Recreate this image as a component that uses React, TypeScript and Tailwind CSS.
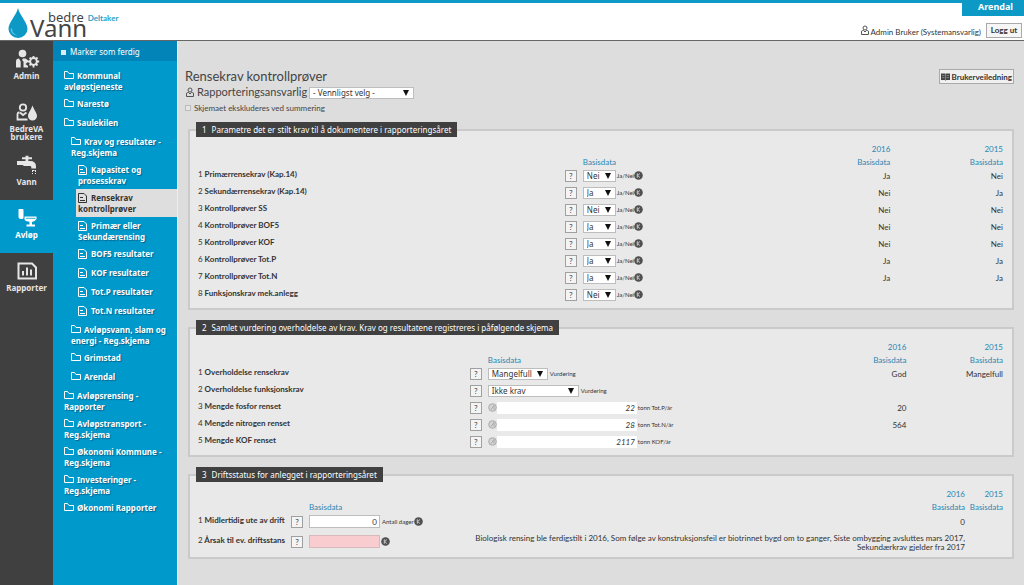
import { useId } from 'react';
import clsx from 'clsx';

type Level = 0 | 1 | 2;

interface TreeItem {
  label: string;
  level: Level;
  active?: boolean;
}

interface RailItem {
  label: string;
  icon: () => React.JSX.Element;
  active?: boolean;
}

const treeItems: TreeItem[] = [
  { label: 'Kommunal avløpstjeneste', level: 0 },
  { label: 'Narestø', level: 0 },
  { label: 'Saulekilen', level: 0 },
  { label: 'Krav og resultater - Reg.skjema', level: 1 },
  { label: 'Kapasitet og prosesskrav', level: 2 },
  { label: 'Rensekrav kontrollprøver', level: 2, active: true },
  { label: 'Primær eller Sekundærensing', level: 2 },
  { label: 'BOF5 resultater', level: 2 },
  { label: 'KOF resultater', level: 2 },
  { label: 'Tot.P resultater', level: 2 },
  { label: 'Tot.N resultater', level: 2 },
  { label: 'Avløpsvann, slam og energi - Reg.skjema', level: 1 },
  { label: 'Grimstad', level: 1 },
  { label: 'Arendal', level: 1 },
  { label: 'Avløpsrensing - Rapporter', level: 0 },
  { label: 'Avløpstransport - Reg.skjema', level: 0 },
  { label: 'Økonomi Kommune - Reg.skjema', level: 0 },
  { label: 'Investeringer - Reg.skjema', level: 0 },
  { label: 'Økonomi Rapporter', level: 0 },
];

const levelMargin: Record<Level, string> = {
  0: 'ml-[11px]',
  1: 'ml-[18px]',
  2: 'ml-[25px]',
};

const requirements = [
  { label: 'Primærrensekrav (Kap.14)', value: 'Nei', y2016: 'Ja', y2015: 'Nei' },
  { label: 'Sekundærrensekrav (Kap.14)', value: 'Ja', y2016: 'Nei', y2015: 'Ja' },
  { label: 'Kontrollprøver SS', value: 'Nei', y2016: 'Nei', y2015: 'Nei' },
  { label: 'Kontrollprøver BOF5', value: 'Ja', y2016: 'Nei', y2015: 'Nei' },
  { label: 'Kontrollprøver KOF', value: 'Ja', y2016: 'Nei', y2015: 'Nei' },
  { label: 'Kontrollprøver Tot.P', value: 'Ja', y2016: 'Ja', y2015: 'Ja' },
  { label: 'Kontrollprøver Tot.N', value: 'Ja', y2016: 'Ja', y2015: 'Ja' },
  { label: 'Funksjonskrav mek.anlegg', value: 'Nei', y2016: '', y2015: '' },
];

const assessments = [
  { label: 'Overholdelse rensekrav', value: 'Mangelfull', width: 'w-[60px]', y2016: 'God', y2015: 'Mangelfull' },
  { label: 'Overholdelse funksjonskrav', value: 'Ikke krav', width: 'w-[91px]', y2016: '', y2015: '' },
];

const amounts = [
  { label: 'Mengde fosfor renset', value: '22', unit: 'tonn Tot.P/år', y2016: '20' },
  { label: 'Mengde nitrogen renset', value: '28', unit: 'tonn Tot.N/år', y2016: '564' },
  { label: 'Mengde KOF renset', value: '2117', unit: 'tonn KOF/år', y2016: '' },
];

function AdminIcon() {
  return (
    <svg viewBox="0 0 26 20" className="h-5 w-[26px]" fill="currentColor">
      <circle cx="8.500" cy="4.500" r="3.800" />
      <path d="M2 18.500V12.500Q2 9.500 5 9.500L6.700 12.500V18.500ZM8 11L9 9.500H11.500L14 11.200V13L11.500 15L14 17V18.500H9.500V12.500Z" />
      <circle cx="19.500" cy="12.500" r="3.400" fill="none" stroke="currentColor" strokeWidth="2" />
      <path
        d="M19.500 7v2M19.500 16v2.500M14 12.500h2M23 12.500h2.200M15.600 8.600l1.400 1.400M22 15l1.500 1.500M15.600 16.400l1.400-1.400M22 10l1.500-1.500"
        stroke="currentColor"
        strokeWidth="1.800"
      />
    </svg>
  );
}

function UserDropIcon() {
  return (
    <svg viewBox="0 0 26 20" className="h-5 w-[26px]" fill="none" stroke="currentColor" strokeWidth="1.800">
      <circle cx="9" cy="5.500" r="3.200" />
      <path d="M5.500 10.500H5Q3.500 10.500 3.500 12.500V17.500H13.500M6 10.500L9 13L12.500 10.500" />
      <path d="M18.500 3.500C17 8 14 10.800 14 14A4.500 4.500 0 0 0 23 14C23 10.800 20 8 18.500 3.500Z" fill="currentColor" stroke="none" />
    </svg>
  );
}

function TapIcon() {
  return (
    <svg viewBox="0 0 26 20" className="h-5 w-[26px]" fill="currentColor">
      <path d="M8 2.200H11.500V0.800H14.500V2.200H18V4.200H14.300V6H16Q22 6 22 11.500V13.500H17.300V12Q17.300 11 16 11H10L8.500 10H3V6H11.500V4.200H8Z" />
      <path d="M18.500 15v4M21.500 15v4M18.500 15.500h3" fill="none" stroke="currentColor" strokeDasharray="2 1" />
    </svg>
  );
}

function ToiletIcon() {
  return (
    <svg viewBox="0 0 26 20" className="h-5 w-[26px]" fill="currentColor">
      <path d="M5 1H8.500Q9.500 1 9.500 2V9Q10 11 8 11H7Q4.500 11 4.500 8.500V1.500Q4.500 1 5 1Z" />
      <path d="M10.500 8.500H22.500V11Q21 13.500 18 14V16.500H21V18.500H12.500V16.500H15.500V13.800Q11.500 13.500 10.500 11.500Z" />
      <path d="M12 10.300h9.500" stroke="#0099cc" strokeWidth="0.800" />
    </svg>
  );
}

function ReportIcon() {
  return (
    <svg viewBox="0 0 26 20" className="h-5 w-[26px]" fill="none" stroke="currentColor" strokeWidth="2">
      <path d="M4.500 2.500H18L22 6.500V17.500H4.500Z" />
      <path d="M9 14.500V10M13 14.500V6.500M17 14.500V8.500" />
    </svg>
  );
}

const railItems: RailItem[] = [
  { label: 'Admin', icon: AdminIcon },
  { label: 'BedreVA brukere', icon: UserDropIcon },
  { label: 'Vann', icon: TapIcon },
  { label: 'Avløp', icon: ToiletIcon, active: true },
  { label: 'Rapporter', icon: ReportIcon },
];

function FolderIcon() {
  return (
    <svg viewBox="0 0 10 9" className="mr-[3px] inline h-[9px] w-[10px] align-[-1px]" fill="none" stroke="currentColor">
      <path d="M0.500 0.500H3.500L5 2.500H9.500V7.500H0.500Z" />
    </svg>
  );
}

function PageIcon() {
  return (
    <svg viewBox="0 0 10 10" className="mr-[3px] inline h-[10px] w-[10px] align-[-2px]" fill="none" stroke="currentColor">
      <path d="M0.500 0.500H6L8.500 3V9.500H0.500Z" />
      <path d="M2 4.500H5M2 7.500H7" />
    </svg>
  );
}

function PersonIcon() {
  return (
    <svg viewBox="0 0 10 11" className="h-[11px] w-[10px] shrink-0" fill="none" stroke="#555">
      <circle cx="5" cy="3" r="2" />
      <path d="M3.500 5.500H2.500Q1.500 5.500 1.500 7V9.500H8.500V7Q8.500 5.500 7.500 5.500H6.500L5 7Z" />
    </svg>
  );
}

function KBadge() {
  return (
    <svg viewBox="0 0 9 9" className="h-[9px] w-[9px] shrink-0">
      <circle cx="4.500" cy="4.500" r="4.300" fill="#505050" />
      <path d="M3.300 2.300V6.700M5.900 2.500L3.700 4.500L5.900 6.500" fill="none" stroke="#ccc" strokeWidth="1" />
    </svg>
  );
}

function HelpButton() {
  return (
    <button
      type="button"
      aria-label="Hjelp"
      className="block h-3 w-3 border border-[#a0a0a0] bg-[#f4f4f4] text-center text-[8px] leading-[10px] text-[#444]"
    >
      ?
    </button>
  );
}

interface SelectProps {
  value: string;
  options?: string[];
  className: string;
  id?: string;
}

function Select({ value, options = [value], className, id }: SelectProps) {
  return (
    <span className={clsx('relative block shrink-0', className)}>
      <select
        id={id}
        defaultValue={value}
        className="block h-3 w-full appearance-none border border-[#bdbdbd] bg-white px-[3px] font-['Noto_Sans',sans-serif] text-[8px] leading-[10px] text-[#333]"
      >
        {options.map((option) => (
          <option key={option}>{option}</option>
        ))}
      </select>
      <svg viewBox="0 0 6 6" className="pointer-events-none absolute top-[3px] right-[5px] h-[6px] w-[6px]">
        <path d="M0 0H6L3 6Z" fill="#111" />
      </svg>
    </span>
  );
}

function YearHeader() {
  return (
    <thead className="text-[8px] text-[#2a87b3]">
      <tr className="h-[13px]">
        <td colSpan={3} />
        <th scope="col" className="p-0 pt-px text-right font-normal">2016</th>
        <th scope="col" className="p-0 pt-px text-right font-normal">2015</th>
      </tr>
      <tr className="h-[13px]">
        <td colSpan={2} />
        <th scope="col" className="p-0 pt-px text-left font-normal">Basisdata</th>
        <th scope="col" className="p-0 pt-px text-right font-normal">Basisdata</th>
        <th scope="col" className="p-0 pt-px text-right font-normal">Basisdata</th>
      </tr>
    </thead>
  );
}

interface SectionProps {
  number: number;
  title: string;
  columns: [string, string, string, string];
  children: React.ReactNode;
}

function Section({ number, title, columns, children }: SectionProps) {
  return (
    <fieldset className="min-w-0 border-2 border-[#cacaca] bg-[#e9e9e9] bg-clip-padding pr-[9px] pb-1 pl-2">
      <legend className="-ml-[2px] flex h-[15px] items-center gap-[5px] bg-[#404040] px-[6px] font-['Noto_Sans',sans-serif] text-[8px] leading-[15px] text-white">
        <span>{number}</span>
        <span>{title}</span>
      </legend>
      <table className="mt-[5px] w-full table-fixed border-collapse text-[8px] leading-[9px] text-[#333]">
        <colgroup>
          <col className={columns[0]} />
          <col className="w-[21px]" />
          <col className={columns[1]} />
          <col className={columns[2]} />
          <col className={columns[3]} />
        </colgroup>
        <YearHeader />
        <tbody>{children}</tbody>
      </table>
    </fieldset>
  );
}

interface RowProps {
  index: number;
  label: string;
  y2016?: string;
  y2015?: string;
  height?: string;
  control: (id: string) => React.ReactNode;
}

function Row({ index, label, y2016, y2015, height = 'h-[17px]', control }: RowProps) {
  const id = useId();
  return (
    <tr className={height}>
      <th scope="row" className="p-0 pb-1 text-left font-bold whitespace-nowrap">
        <label htmlFor={id}>
          <span className="font-normal">{index}</span> {label}
        </label>
      </th>
      <td className="p-0 pb-[2px] pl-[3px]">
        <HelpButton />
      </td>
      <td className="p-0 pb-[2px]">
        <div className="flex items-center">{control(id)}</div>
      </td>
      <td className="p-0 text-right">{y2016}</td>
      <td className="p-0 text-right">{y2015}</td>
    </tr>
  );
}

function Header() {
  return (
    <header className="flex h-[41px] justify-between border-t-[3px] border-b border-t-[#0d99c6] border-b-[#666] bg-white">
      <a href="#" className="flex pl-2">
        <svg viewBox="0 0 20 32" className="mt-[4px] h-8 w-5">
          <path d="M10 1C8 9 0.500 15 0.500 22A9.500 9 0 0 0 19.500 22C19.500 15 12 9 10 1Z" fill="#0d99c6" />
          <path d="M4 21Q4 27 10 28.500Q3 28 2.500 22Z" fill="#5cc0e0" />
        </svg>
        <span className="flex flex-col pt-[6px] pl-[2px] text-[#444]">
          <span className="flex items-center gap-1 pl-[18px] text-[13px] leading-[12px]">
            bedre <span className="pt-[3px] font-[Lato,sans-serif] text-[8px] font-bold text-[#2a9fc8]">Deltaker</span>
          </span>
          <span className="text-[24px] leading-[8px]">Vann</span>
        </span>
      </a>
      <div className="-mt-[3px] flex flex-col items-end">
        <span className="h-4 w-[62px] bg-[#0d99c6] pr-[11px] text-right text-[9px] leading-[14px] font-bold text-white">
          Arendal
        </span>
        <div className="flex items-center pt-[7px] pr-[2px] font-[Lato,sans-serif] text-[8px] text-[#333]">
          <PersonIcon />
          <span className="pt-[3px] pr-[5px] pl-[1px]">Admin Bruker (Systemansvarlig)</span>
          <button type="button" className="h-[15px] w-9 border border-[#aaa] bg-[#f6f6f6] text-[8px] leading-[13px] font-bold">
            Logg ut
          </button>
        </div>
      </div>
    </header>
  );
}

function Rail() {
  return (
    <nav className="w-[53px] shrink-0 bg-[#404040] text-[#e6e6e6]">
      {railItems.map(({ label, icon: Icon, active }) => (
        <a
          key={label}
          href="#"
          className={clsx('flex h-[53px] flex-col items-center px-1 pt-2 text-center text-[8px] leading-[8px] font-bold', active && 'bg-[#0099cc] text-white')}
        >
          <Icon />
          <span className="mt-[3px]">{label}</span>
        </a>
      ))}
    </nav>
  );
}

function Tree() {
  return (
    <nav className="w-[124px] shrink-0 bg-[#0099cc] text-[8px] text-white">
      <label className="flex h-[20px] items-center gap-1 bg-[#0384b8] pt-[2px] pl-2">
        <input type="checkbox" className="h-[5px] w-[5px] appearance-none bg-[#dcecf4]" />
        Marker som ferdig
      </label>
      <ul className="flex flex-col gap-[6px] pt-[9px] leading-[11px] font-bold">
        {treeItems.map(({ label, level, active }) => (
          <li key={label} className={clsx('min-h-[13px]', levelMargin[level])}>
            <a
              href="#"
              className={clsx(
                'block',
                active
                  ? '-my-[3px] -ml-[2px] bg-[#dedede] py-[3px] pl-[2px] text-[#333]'
                  : '[text-shadow:1px_1px_1px_rgba(0,50,80,0.5)]',
              )}
            >
              {level === 2 ? <PageIcon /> : <FolderIcon />}
              {label}
            </a>
          </li>
        ))}
      </ul>
    </nav>
  );
}

export default function App() {
  return (
    <div className="flex min-h-screen flex-col bg-[#dddddd] font-['Noto_Sans',sans-serif] text-[#333]">
      <Header />
      <div className="flex grow">
        <Rail />
        <Tree />
        <main className="min-w-0 grow border-l border-[#eeeeee] px-[10px] font-[Lato,sans-serif]">
          <div className="-ml-[3px] flex items-start justify-between pt-[27px]">
            <div>
              <h1 className="text-[13px] leading-4 text-[#444]">Rensekrav kontrollprøver</h1>
              <div className="flex h-[17px] items-center text-[#444]">
                <PersonIcon />
                <label htmlFor="ansvarlig" className="pr-[2px] pl-[2px] text-[11px]">
                  Rapporteringsansvarlig
                </label>
                <Select id="ansvarlig" value="- Vennligst velg -" className="w-[105px]" />
              </div>
              <label className="flex h-[14px] items-center gap-[3px] text-[8px] text-[#444]">
                <input type="checkbox" className="h-[6px] w-[6px] appearance-none border border-[#bbb] bg-[#e6e6e6]" />
                Skjemaet ekskluderes ved summering
              </label>
            </div>
            <button
              type="button"
              className="mt-px flex h-[15px] items-center gap-[2px] border border-[#aaa] bg-[#f0f0f0] px-px text-[8px] font-bold"
            >
              <svg viewBox="0 0 9 8" className="h-2 w-[9px]">
                <path d="M0 0.500H4L4.500 1L5 0.500H9V7H5.200L4.500 7.700L3.800 7H0Z" fill="#444" />
                <path d="M1 2.500H3.500M1 4.500H3.500M5.500 2.500H8M5.500 4.500H8M4.500 1V7" stroke="#aaa" strokeWidth="0.600" />
              </svg>
              Brukerveiledning
            </button>
          </div>

          <div className="flex flex-col gap-[10px] pt-[7px]">
            <Section
              number={1}
              title="Parametre det er stilt krav til å dokumentere i rapporteringsåret"
              columns={['w-[45.2%]', 'w-auto', 'w-[14%]', 'w-[14%]']}
            >
              {requirements.map((row, i) => (
                <Row
                  key={row.label}
                  index={i + 1}
                  label={row.label}
                  y2016={row.y2016}
                  y2015={row.y2015}
                  control={(id) => (
                    <>
                      <Select id={id} value={row.value} options={['Ja', 'Nei']} className="w-[33px]" />
                      <span className="pl-px text-[6px]">Ja/Nei</span>
                      <KBadge />
                    </>
                  )}
                />
              ))}
            </Section>

            <Section
              number={2}
              title="Samlet vurdering overholdelse av krav. Krav og resultatene registreres i påfølgende skjema"
              columns={['w-[33.4%]', 'w-[30%]', 'w-auto', 'w-[12%]']}
            >
              {assessments.map((row, i) => (
                <Row
                  key={row.label}
                  index={i + 1}
                  label={row.label}
                  y2016={row.y2016}
                  y2015={row.y2015}
                  control={(id) => (
                    <>
                      <Select id={id} value={row.value} className={row.width} />
                      <span className="pl-[2px] text-[6px]">Vurdering</span>
                    </>
                  )}
                />
              ))}
              {amounts.map((row, i) => (
                <Row
                  key={row.label}
                  index={i + 3}
                  label={row.label}
                  y2016={row.y2016}
                  control={(id) => (
                    <>
                      <svg viewBox="0 0 9 9" className="h-[9px] w-[9px] shrink-0" fill="none" stroke="#aaa">
                        <circle cx="4.500" cy="4.500" r="3.800" fill="#d4d4d4" />
                        <path d="M3 6.500L6 2.500V6.500" />
                      </svg>
                      <input
                        id={id}
                        defaultValue={row.value}
                        className="h-3 w-[140px] bg-white px-[2px] text-right text-[8px] text-[#333] italic"
                      />
                      <span className="pl-px text-[6px] whitespace-nowrap">{row.unit}</span>
                    </>
                  )}
                />
              ))}
            </Section>

            <Section
              number={3}
              title="Driftsstatus for anlegget i rapporteringsåret"
              columns={['w-[90px]', 'w-[150px]', 'w-auto', 'w-[38px]']}
            >
              <Row
                index={1}
                label="Midlertidig ute av drift"
                y2016="0"
                height="h-[19px]"
                control={(id) => (
                  <>
                    <input
                      id={id}
                      defaultValue="0"
                      className="h-[13px] w-[71px] border border-[#bdbdbd] bg-white px-[2px] text-right text-[8px]"
                    />
                    <span className="pl-[2px] text-[6px]">Antall dager</span>
                    <KBadge />
                  </>
                )}
              />
              <Row
                index={2}
                label="Årsak til ev. driftsstans"
                y2016="Biologisk rensing ble ferdigstilt i 2016, Som følge av konstruksjonsfeil er biotrinnet bygd om to ganger, Siste ombygging avsluttes mars 2017, Sekundærkrav gjelder fra 2017"
                height="h-[21px]"
                control={(id) => (
                  <>
                    <input id={id} className="mr-px h-[13px] w-[71px] border border-[#d9b9bb] bg-[#f9cdd0] text-[8px]" />
                    <KBadge />
                  </>
                )}
              />
            </Section>
          </div>
        </main>
      </div>
    </div>
  );
}
